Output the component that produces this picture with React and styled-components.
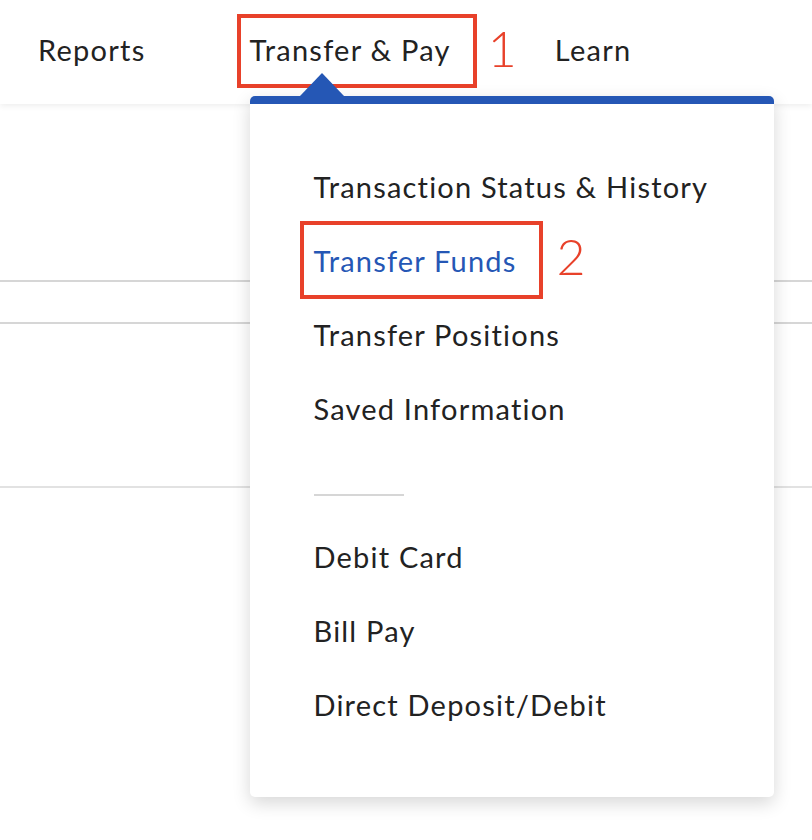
import styled, { createGlobalStyle } from "styled-components";

const GlobalStyle = createGlobalStyle`
  body {
    margin: 0;
    background: #fff;
    font-family: Lato, "Open Sans", sans-serif;
    color: #222;
  }
`;

const menuTop = [
  { label: "Transaction Status & History" },
  { label: "Transfer Funds", active: true, mark: "2" },
  { label: "Transfer Positions" },
  { label: "Saved Information" },
];

const menuBottom = [
  { label: "Debit Card" },
  { label: "Bill Pay" },
  { label: "Direct Deposit/Debit" },
];

const App = () => {
  return (
    <Page>
      <GlobalStyle />
      <Header>
        <NavList>
          <NavItem>
            <NavLabel>Reports</NavLabel>
          </NavItem>
          <NavItem>
            <NavLabel $marked>
              Transfer &amp; Pay
              <Annotation $top={-22} $gap={37}>1</Annotation>
            </NavLabel>
            <Dropdown>
              <MenuGroup>
                {menuTop.map((item) => (
                  <MenuRow key={item.label}>
                    <MenuLink $active={item.active} $marked={!!item.mark}>
                      {item.label}
                      {item.mark && (
                        <Annotation $top={-5} $gap={40}>
                          {item.mark}
                        </Annotation>
                      )}
                    </MenuLink>
                  </MenuRow>
                ))}
              </MenuGroup>
              <Divider />
              <MenuGroup>
                {menuBottom.map((item) => (
                  <MenuRow key={item.label}>
                    <MenuLink>{item.label}</MenuLink>
                  </MenuRow>
                ))}
              </MenuGroup>
            </Dropdown>
          </NavItem>
          <NavItem>
            <NavLabel>Learn</NavLabel>
          </NavItem>
        </NavList>
      </Header>
      <Content>
        <Section $height={176} />
        <Section $height={40} />
        <Section $height={162} $light />
      </Content>
    </Page>
  );
};

export default App;

const Page = styled.div`
  position: relative;
  width: 812px;
  height: 840px;
  overflow: hidden;
  background: #fff;
`;

const Header = styled.header`
  position: relative;
  z-index: 2;
  height: 104px;
  background: #fff;
  box-shadow: 0 2px 6px rgba(0, 0, 0, 0.07);
`;

const NavList = styled.nav`
  display: flex;
  height: 100%;
  padding-left: 38px;
  gap: 104px;
`;

const NavItem = styled.div`
  position: relative;
  display: flex;
  align-items: center;
  height: 100%;
`;

const NavLabel = styled.span`
  position: relative;
  font-size: 29px;
  letter-spacing: 1.25px;
  line-height: 34px;
  color: #222;
  white-space: nowrap;
  margin-top: -4px;

  ${({ $marked }) =>
    $marked &&
    `
    &::before {
      content: "";
      position: absolute;
      left: -13px;
      right: -26px;
      top: -19px;
      bottom: -21px;
      border: 4px solid #e8412a;
    }
  `}
`;

const Annotation = styled.span`
  position: absolute;
  left: calc(100% + ${({ $gap }) => $gap}px);
  top: ${({ $top }) => $top}px;
  font-size: 50px;
  font-weight: 300;
  letter-spacing: 0;
  line-height: 74px;
  color: #e8412a;
`;

const Dropdown = styled.div`
  position: absolute;
  left: 0;
  top: 96px;
  width: 524px;
  box-sizing: border-box;
  padding: 46px 0 55px 64px;
  background: #fff;
  border-top: 8px solid #2557b5;
  border-radius: 5px;
  box-shadow: 0 6px 18px rgba(0, 0, 0, 0.16);

  &::before {
    content: "";
    position: absolute;
    left: 50px;
    top: -31px;
    border-left: 22px solid transparent;
    border-right: 22px solid transparent;
    border-bottom: 23px solid #2557b5;
  }
`;

const MenuGroup = styled.ul`
  list-style: none;
  margin: 0;
  padding: 0;
`;

const MenuRow = styled.li`
  height: 74px;
`;

const MenuLink = styled.span`
  position: relative;
  display: inline-block;
  font-size: 29px;
  letter-spacing: 1.2px;
  line-height: 74px;
  color: ${({ $active }) => ($active ? "#2557b5" : "#222")};
  white-space: nowrap;

  ${({ $marked }) =>
    $marked &&
    `
    &::before {
      content: "";
      position: absolute;
      left: -14px;
      right: -26px;
      top: -3px;
      bottom: -1px;
      border: 4px solid #e8412a;
    }
  `}
`;

const Divider = styled.hr`
  width: 90px;
  height: 2px;
  margin: 48px 0 24px;
  border: none;
  background: #d6d6d6;
`;

const Content = styled.main`
  display: flex;
  flex-direction: column;
`;

const Section = styled.div`
  height: ${({ $height }) => $height}px;
  border-bottom: 2px solid ${({ $light }) => ($light ? "#e2e2e2" : "#d6d6d6")};
`;
